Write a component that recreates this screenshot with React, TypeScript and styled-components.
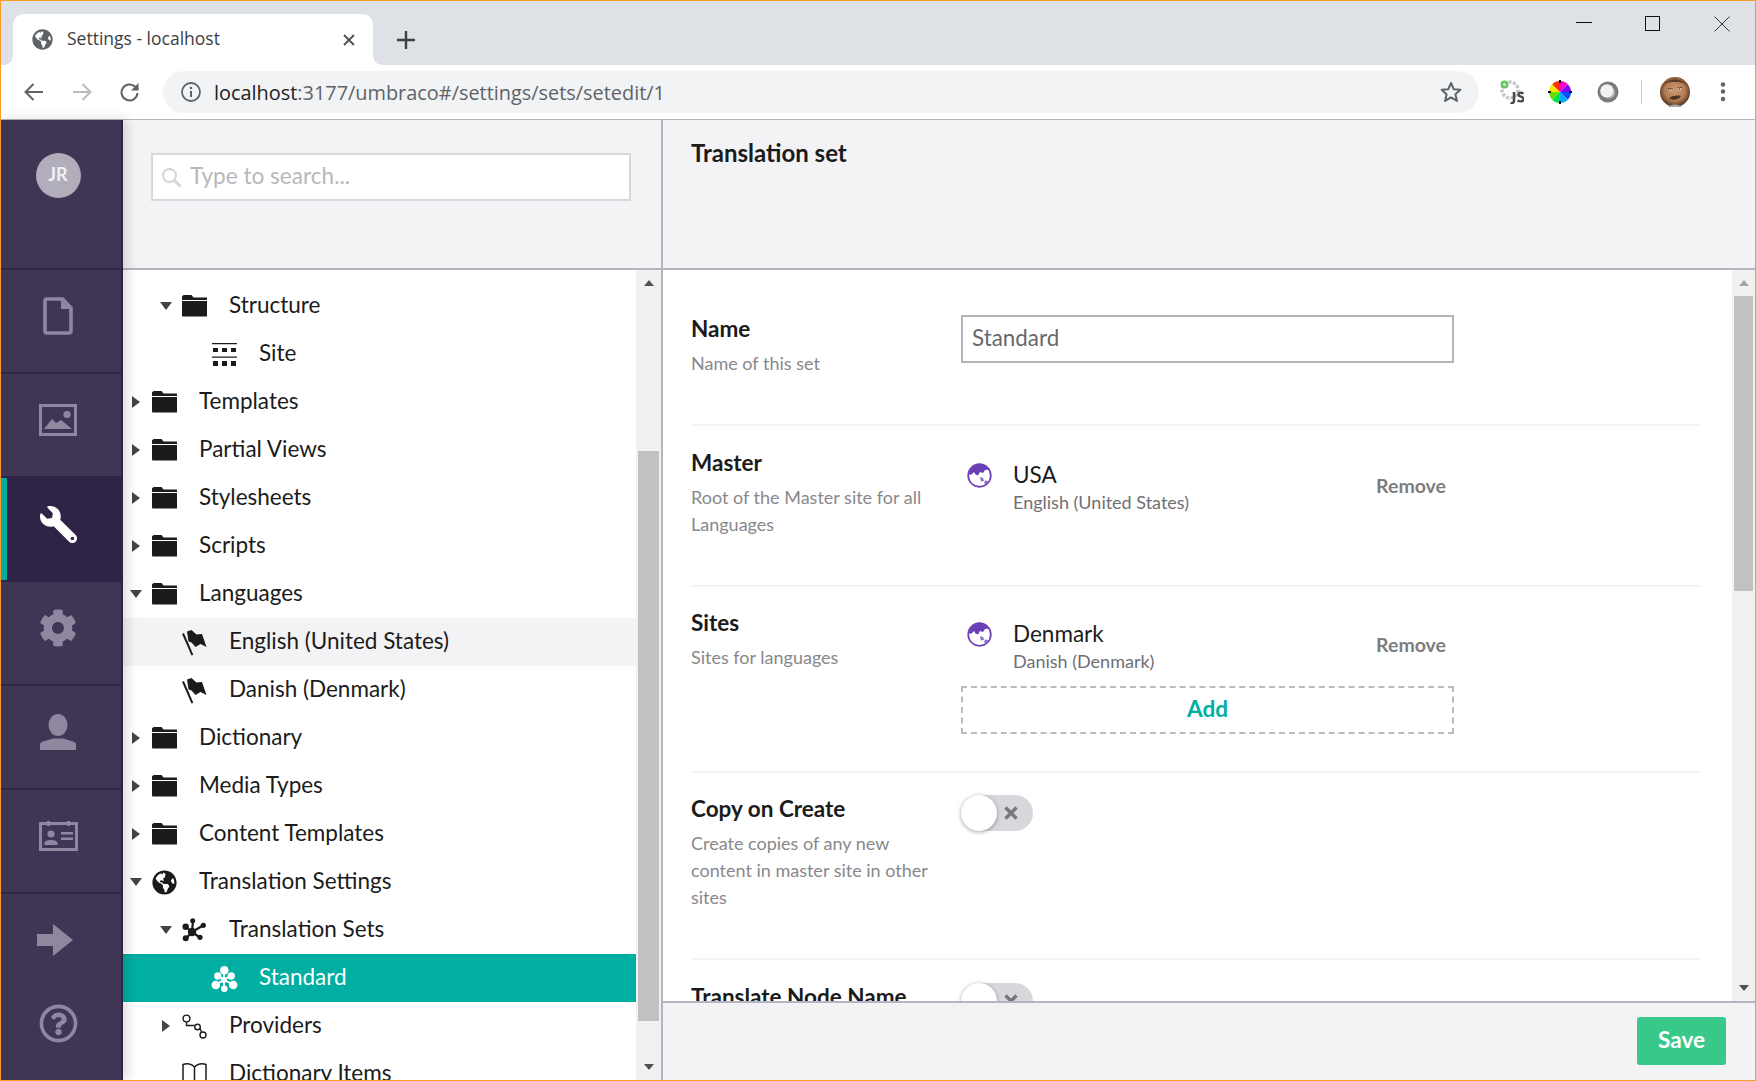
import React from 'react';
import styled, { createGlobalStyle, css } from 'styled-components';
import { FaCog, FaGlobeAmericas, FaRegQuestionCircle, FaWrench } from 'react-icons/fa';

const GlobalStyle = createGlobalStyle`
  html, body {
    margin: 0;
    padding: 0;
    overflow: hidden;
    background: #fff;
  }
  * {
    box-sizing: border-box;
  }
`;

const Page = styled.div`
  display: flex;
  flex-direction: column;
  width: 1756px;
  height: 1081px;
  border: 1px solid #fb9a26;
  overflow: hidden;
  font-family: Lato, 'Liberation Sans', sans-serif;
  color: #1b1b1b;
`;

/* browser chrome */

const TabStrip = styled.div`
  display: flex;
  flex: none;
  height: 64px;
  padding-left: 12px;
  background: #dee1e6;
`;

const Tab = styled.div`
  position: relative;
  display: flex;
  align-items: center;
  flex: none;
  width: 360px;
  height: 51px;
  margin-top: 13px;
  padding-left: 19px;
  background: #fff;
  border-radius: 11px 11px 0 0;
  color: #5f6368;
  &::before,
  &::after {
    content: '';
    position: absolute;
    bottom: 0;
    width: 9px;
    height: 9px;
  }
  &::before {
    left: -9px;
    background: radial-gradient(circle at 0 0, #dee1e6 8.5px, #fff 9px);
  }
  &::after {
    right: -9px;
    background: radial-gradient(circle at 100% 0, #dee1e6 8.5px, #fff 9px);
  }
`;

const TabTitle = styled.span`
  flex: 1;
  margin: 0 0 3px 14px;
  font-family: 'Open Sans', sans-serif;
  font-size: 17.5px;
  color: #3c4043;
`;

const TabClose = styled.svg`
  width: 12px;
  height: 12px;
  margin-right: 18px;
`;

const NewTab = styled.svg`
  flex: none;
  width: 18px;
  height: 18px;
  margin: 30px 0 0 24px;
`;

const WindowControls = styled.div`
  display: flex;
  gap: 53px;
  margin: 15px 25px 0 auto;
  height: 16px;
`;

const WindowIcon = styled.svg`
  width: 16px;
  height: 16px;
`;

const Toolbar = styled.div`
  display: flex;
  flex: none;
  align-items: center;
  height: 55px;
  padding: 0 0 1px 21px;
  background: #fff;
  border-bottom: 1px solid #b5b4be;
`;

const NavIcons = styled.div`
  display: flex;
  gap: 24px;
`;

const NavIcon = styled.svg`
  width: 24px;
  height: 24px;
`;

const Omnibox = styled.div`
  display: flex;
  align-items: center;
  flex: none;
  width: 1316px;
  height: 42px;
  margin: 1px 0 0 21px;
  padding: 0 16px 0 16px;
  background: #f1f3f4;
  border-radius: 21px;
`;

const Url = styled.span`
  flex: 1;
  margin-left: 11px;
  font-family: 'Open Sans', sans-serif;
  font-size: 19.9px;
  color: #5f6368;
  white-space: nowrap;
`;

const UrlHost = styled.span`
  color: #202124;
`;

const Extensions = styled.div`
  display: flex;
  align-items: center;
  gap: 24px;
  margin: 1px 0 0 21px;
`;

const ExtIcon = styled.svg`
  display: block;
  width: 24px;
  height: 24px;
`;

const ToolbarDivider = styled.div`
  width: 1px;
  height: 24px;
  margin: 1px 0 0 21px;
  background: #cdced1;
`;

const Profile = styled.svg`
  flex: none;
  width: 30px;
  height: 30px;
  margin: 1px 0 0 18px;
`;

const Kebab = styled.svg`
  flex: none;
  width: 12px;
  height: 22px;
  margin: 1px 0 0 27px;
`;

/* app */

const Body = styled.div`
  display: flex;
  flex: 1;
  min-height: 0;
`;

const Sidebar = styled.nav`
  position: relative;
  z-index: 1;
  display: flex;
  flex: none;
  flex-direction: column;
  width: 122px;
  background: #413556;
  border-right: 2px solid #2f2445;
  box-shadow: 3px 0 12px rgba(0, 0, 0, 0.16);
`;

const SidebarTop = styled.div`
  flex: none;
  height: 150px;
  padding: 33px 6px 0 0;
  border-bottom: 2px solid #2f2445;
`;

const Avatar = styled.div`
  display: flex;
  align-items: center;
  justify-content: center;
  width: 45px;
  height: 45px;
  margin: 0 auto;
  padding-bottom: 4px;
  border-radius: 50%;
  background: #b1adbb;
  color: #f1f0f3;
  font-size: 18px;
  font-weight: 700;
`;

const SideItem = styled.div<{ $active?: boolean; $plain?: boolean; $height?: number }>(
  ({ $active, $plain, $height = 104 }) => css`
    display: flex;
    flex: none;
    align-items: center;
    justify-content: center;
    height: ${$height}px;
    padding: ${$plain ? '0 6px 0 0' : '0 6px 10px 0'};
    color: #8f879f;
    border-bottom: ${$plain ? 'none' : '2px solid #2f2445'};
    ${$active &&
    css`
      color: #fff;
      background: #2f2445;
      box-shadow: inset 6px 0 0 #00aea2;
    `}
  `,
);

const Mirror = styled.span`
  display: flex;
  transform: scaleX(-1);
`;

const SideSvg = styled.svg<{ $shift?: number }>(
  ({ $shift = 0 }) => css`
    display: block;
    margin-right: ${$shift}px;
    fill: currentColor;
  `,
);

const TreePanel = styled.section`
  display: flex;
  flex: none;
  flex-direction: column;
  width: 540px;
  border-right: 2px solid #b5b4c2;
`;

const SearchHeader = styled.div`
  flex: none;
  height: 150px;
  padding: 33px 30px 0 28px;
  background: #f3f3f5;
  border-bottom: 2px solid #b5b4c2;
`;

const Search = styled.div`
  display: flex;
  align-items: center;
  height: 48px;
  padding: 0 0 3px 8px;
  background: #fff;
  border: 2px solid #d8d8dc;
  color: #b8b8b8;
  font-size: 22.6px;
`;

const SearchIcon = styled.svg`
  flex: none;
  width: 21px;
  height: 21px;
  margin: 4px 8px 0 0;
`;

const TreeArea = styled.div`
  display: flex;
  flex: 1;
  min-height: 0;
`;

const TreeList = styled.ul`
  flex: 1;
  margin: 0;
  padding: 12px 0 0;
  overflow: hidden;
  list-style: none;
`;

const TreeRow = styled.li<{ $level: number; $state?: 'hover' | 'active' }>(
  ({ $level, $state }) => css`
    display: flex;
    align-items: center;
    height: 48px;
    padding-left: ${7 + $level * 30}px;
    font-size: 22.5px;
    white-space: nowrap;
    background: ${$state === 'active' ? '#00aea2' : $state === 'hover' ? '#f3f3f5' : 'transparent'};
    color: ${$state === 'active' ? '#fff' : '#1b1b1b'};
  `,
);

const TreeLabel = styled.span`
  margin-bottom: 3px;
`;

const CaretSlot = styled.span`
  display: flex;
  flex: none;
  align-items: center;
  justify-content: center;
  width: 12px;
  height: 12px;
  margin-right: 10px;
`;

const Caret = styled.span<{ $open?: boolean }>(
  ({ $open }) => css`
    width: 0;
    height: 0;
    ${$open
      ? css`
          border-left: 6px solid transparent;
          border-right: 6px solid transparent;
          border-top: 8px solid #444;
        `
      : css`
          border-top: 6px solid transparent;
          border-bottom: 6px solid transparent;
          border-left: 8px solid #444;
        `}
  `,
);

const TreeIcon = styled.svg`
  flex: none;
  width: 25px;
  height: 25px;
  margin-right: 22px;
  fill: currentColor;
  overflow: visible;
`;

const TreeGlobe = styled.span`
  display: flex;
  flex: none;
  width: 25px;
  margin-right: 22px;
  color: #1b1b1b;
`;

const ScrollTrack = styled.div<{ $width: number }>(
  ({ $width }) => css`
    display: flex;
    flex: none;
    flex-direction: column;
    width: ${$width}px;
    background: #f1f1f1;
  `,
);

const ScrollArrow = styled.div<{ $down?: boolean; $pale?: boolean }>(
  ({ $down, $pale }) => css`
    display: flex;
    flex: none;
    align-items: center;
    justify-content: center;
    height: 26px;
    &::after {
      content: '';
      width: 0;
      height: 0;
      border-left: 5.5px solid transparent;
      border-right: 5.5px solid transparent;
      ${$down
        ? `border-top: 6px solid ${$pale ? '#a3a3a3' : '#505050'};`
        : `border-bottom: 6px solid ${$pale ? '#a3a3a3' : '#505050'};`}
    }
  `,
);

const ScrollSpace = styled.div`
  flex: 1;
  display: flex;
  flex-direction: column;
  padding: 0 2px;
`;

const ScrollThumb = styled.div<{ $top: number; $height: number }>(
  ({ $top, $height }) => css`
    flex: none;
    height: ${$height}px;
    margin-top: ${$top}px;
    background: #c1c1c1;
  `,
);

const EditorPanel = styled.section`
  display: flex;
  flex: 1;
  min-width: 0;
  flex-direction: column;
`;

const EditorHeader = styled.header`
  flex: none;
  height: 150px;
  padding: 19px 28px 0;
  background: #f3f3f5;
  border-bottom: 2px solid #b5b4c2;
  font-size: 24px;
  font-weight: 700;
  line-height: 27px;
`;

const EditorMain = styled.div`
  display: flex;
  flex: 1;
  min-height: 0;
`;

const Form = styled.div`
  flex: 1;
  min-width: 0;
  padding: 22px 31px 0 28px;
  overflow: hidden;
`;

const FormRow = styled.div<{ $top: number; $bottom: number; $last?: boolean }>(
  ({ $top, $bottom, $last }) => css`
    display: flex;
    padding: ${$top}px 0 ${$bottom}px;
    border-bottom: ${$last ? 'none' : '2px solid #f3f3f5'};
  `,
);

const LabelCol = styled.div`
  flex: none;
  width: 270px;
`;

const Label = styled.div`
  font-size: 22.5px;
  font-weight: 700;
  line-height: 27px;
`;

const Hint = styled.div`
  width: 250px;
  margin-top: 8px;
  color: #88888c;
  font-size: 18px;
  line-height: 27px;
`;

const ValueCol = styled.div<{ $top?: number }>(
  ({ $top = 0 }) => css`
    flex: none;
    width: 493px;
    padding-top: ${$top}px;
  `,
);

const TextInput = styled.div`
  display: flex;
  align-items: center;
  height: 48px;
  padding: 0 0 3px 9px;
  border: 2px solid #b5b4bc;
  color: #68676c;
  font-size: 22.4px;
`;

const Picked = styled.div`
  display: flex;
  align-items: center;
  height: 77px;
`;

const PickedIcon = styled.svg`
  flex: none;
  align-self: flex-start;
  width: 25px;
  height: 25px;
  margin: 13px 21px 0 6px;
`;

const PickedText = styled.div`
  flex: 1;
`;

const PickedName = styled.div`
  font-size: 22.5px;
  line-height: 27px;
`;

const PickedSub = styled.div`
  margin-top: 1px;
  color: #6f6f73;
  font-size: 18px;
  line-height: 27px;
`;

const RemoveLink = styled.span`
  margin: 0 8px 6px 0;
  color: #7d7d80;
  font-size: 19.5px;
  font-weight: 700;
`;

const AddBox = styled.div`
  display: flex;
  align-items: center;
  justify-content: center;
  height: 48px;
  padding-bottom: 3px;
  border: 2px dashed #bbbbbf;
  color: #00aea2;
  font-size: 22.6px;
  font-weight: 700;
`;

const Toggle = styled.div`
  position: relative;
  display: flex;
  align-items: center;
  justify-content: flex-end;
  width: 72px;
  height: 36px;
  padding-right: 14px;
  border-radius: 18px;
  background: #d8d8dc;
  &::before {
    content: '';
    position: absolute;
    top: 0;
    left: 0;
    width: 36px;
    height: 36px;
    border-radius: 50%;
    background: #fff;
    box-shadow: 0 1px 4px rgba(0, 0, 0, 0.35);
  }
`;

const ToggleX = styled.svg`
  width: 16px;
  height: 16px;
`;

const EditorFooter = styled.footer`
  display: flex;
  flex: none;
  justify-content: flex-end;
  height: 79px;
  padding: 14px 29px 0 0;
  background: #f3f3f5;
  border-top: 2px solid #b5b4c2;
`;

const SaveButton = styled.div`
  display: flex;
  align-items: center;
  justify-content: center;
  width: 89px;
  height: 48px;
  padding-bottom: 3px;
  border-radius: 3px;
  background: #38c98a;
  color: #fff;
  font-size: 22.6px;
  font-weight: 700;
`;

/* drawings */

const FolderIcon = () => (
  <TreeIcon viewBox="0 0 25 25">
    <path d="M0 5V2.500L1.500 1h8l2 2.500H25V6H0z" />
    <path d="M0 7h25v15.500H1a1 1 0 0 1-1-1z" />
  </TreeIcon>
);

const SiteIcon = () => (
  <TreeIcon viewBox="0 0 25 25">
    <path d="M0 1h25v1.200H0zM0 14.500h25v1.200H0z" />
    <path d="M1 6h5v4H1zM10 6h5v4h-5zM19 6h5v4h-5zM1 19h5v5H1zM10 19h5v5h-5zM19 19h5v5h-5z" />
  </TreeIcon>
);

const FlagIcon = () => (
  <TreeIcon viewBox="0 0 25 25">
    <path d="M1 3.500l9.400 21.600" stroke="currentColor" strokeWidth="2" fill="none" />
    <path d="M5 1.500L9.500 0l5 4.500 5.500-.5 4.500 13-6-3-5 3-4-4.500-3-1z" />
  </TreeIcon>
);

const SetsIcon = () => (
  <TreeIcon viewBox="0 0 25 25">
    <path d="M10 14L4 9M10 14L11 3M10 14L21 7.500M10 14l8 5.500M10 14L4 20.500" stroke="currentColor" strokeWidth="2.200" />
    <circle cx="10" cy="14" r="4.200" />
    <circle cx="3.700" cy="8.700" r="3.200" />
    <circle cx="10.700" cy="2.700" r="2.500" />
    <circle cx="21.300" cy="7.300" r="2.600" />
    <circle cx="18" cy="19.300" r="2.600" />
    <circle cx="3.700" cy="20.300" r="3" />
  </TreeIcon>
);

const StandardIcon = () => (
  <TreeIcon viewBox="1 0 25 25">
    <path d="M13 13.500V4M13 13.500L7 10M13 13.500L20 10M13 13.500L5 19M13 13.500L22 19M13 13.500V22" stroke="currentColor" strokeWidth="1.800" />
    <circle cx="13" cy="14" r="3" />
    <circle cx="13.300" cy="4.300" r="4.300" />
    <circle cx="6.800" cy="10" r="3.700" />
    <circle cx="20.200" cy="10" r="3.700" />
    <circle cx="4.800" cy="19" r="4.300" />
    <circle cx="22.200" cy="19" r="4.300" />
    <circle cx="13.300" cy="22.700" r="3.300" />
  </TreeIcon>
);

const ProvidersIcon = () => (
  <TreeIcon viewBox="0 0 25 25">
    <g fill="none" stroke="currentColor" strokeWidth="1.400">
      <circle cx="4.500" cy="4.500" r="3.400" />
      <circle cx="15.500" cy="13" r="2.800" />
      <circle cx="21" cy="21" r="3" />
      <path d="M4.500 8v3.500h8M18 14.500l1.500 3.500" />
    </g>
  </TreeIcon>
);

const BookIcon = () => (
  <TreeIcon viewBox="0 0 25 25">
    <path
      d="M12.500 5C10 2 5 1 1 2.500V24c4-1 9 0 11.500 2 2.500-2 7.500-3 11.500-2V2.500C20 1 15 2 12.500 5zv21"
      fill="none"
      stroke="currentColor"
      strokeWidth="1.500"
    />
  </TreeIcon>
);

const PurpleGlobe = () => (
  <PickedIcon viewBox="0 0 25 25">
    <circle cx="12.500" cy="12.500" r="11.300" fill="#fff" stroke="#6a3fb5" strokeWidth="1.700" />
    <path
      d="M2 11C3 5 8 1.500 12.500 1.500c4 0 8 2 9.500 5l-4 .5-2 3-3-1-2 3.500-2.500-1-1.500-2.500-2 2-1.500 1z"
      fill="#6a3fb5"
    />
    <path d="M13 14l3 1 1 3-3 .5zM18 17.500l3 .5-1 3-3-.5z" fill="#8a68c9" />
  </PickedIcon>
);

const treeRows: {
  label: string;
  level: number;
  icon: React.ReactNode;
  caret?: 'open' | 'closed';
  state?: 'hover' | 'active';
}[] = [
  { label: 'Structure', level: 1, icon: <FolderIcon />, caret: 'open' },
  { label: 'Site', level: 2, icon: <SiteIcon /> },
  { label: 'Templates', level: 0, icon: <FolderIcon />, caret: 'closed' },
  { label: 'Partial Views', level: 0, icon: <FolderIcon />, caret: 'closed' },
  { label: 'Stylesheets', level: 0, icon: <FolderIcon />, caret: 'closed' },
  { label: 'Scripts', level: 0, icon: <FolderIcon />, caret: 'closed' },
  { label: 'Languages', level: 0, icon: <FolderIcon />, caret: 'open' },
  { label: 'English (United States)', level: 1, icon: <FlagIcon />, state: 'hover' },
  { label: 'Danish (Denmark)', level: 1, icon: <FlagIcon /> },
  { label: 'Dictionary', level: 0, icon: <FolderIcon />, caret: 'closed' },
  { label: 'Media Types', level: 0, icon: <FolderIcon />, caret: 'closed' },
  { label: 'Content Templates', level: 0, icon: <FolderIcon />, caret: 'closed' },
  {
    label: 'Translation Settings',
    level: 0,
    icon: (
      <TreeGlobe>
        <FaGlobeAmericas size={25} />
      </TreeGlobe>
    ),
    caret: 'open',
  },
  { label: 'Translation Sets', level: 1, icon: <SetsIcon />, caret: 'open' },
  { label: 'Standard', level: 2, icon: <StandardIcon />, state: 'active' },
  { label: 'Providers', level: 1, icon: <ProvidersIcon />, caret: 'closed' },
  { label: 'Dictionary Items', level: 1, icon: <BookIcon /> },
];

const CloseX = () => (
  <ToggleX viewBox="0 0 16 16">
    <path d="M2.500 2.500l11 11M13.500 2.500l-11 11" stroke="#77767c" strokeWidth="3.400" />
  </ToggleX>
);

export default function App() {
  return (
    <Page>
      <GlobalStyle />
      <TabStrip>
        <Tab>
          <FaGlobeAmericas size={21} color="#5f6368" />
          <TabTitle>Settings - localhost</TabTitle>
          <TabClose viewBox="0 0 12 12">
            <path d="M1 1l10 10M11 1L1 11" stroke="#4a4d51" strokeWidth="1.800" />
          </TabClose>
        </Tab>
        <NewTab viewBox="0 0 18 18">
          <path d="M9 0v18M0 9h18" stroke="#3c4043" strokeWidth="2.400" />
        </NewTab>
        <WindowControls>
          <WindowIcon viewBox="0 0 16 16">
            <path d="M0 6.500h16" stroke="#111" strokeWidth="1" />
          </WindowIcon>
          <WindowIcon viewBox="0 0 16 16">
            <rect x="0.500" y="0.500" width="14" height="14" fill="none" stroke="#111" strokeWidth="1" />
          </WindowIcon>
          <WindowIcon viewBox="0 0 16 16">
            <path d="M0.500 0.500l15 15M15.500 0.500l-15 15" stroke="#333" strokeWidth="1" />
          </WindowIcon>
        </WindowControls>
      </TabStrip>

      <Toolbar>
        <NavIcons>
          <NavIcon viewBox="0 0 24 24">
            <path d="M21 12H4M11.500 4L3.500 12l8 8" fill="none" stroke="#5f6368" strokeWidth="2" />
          </NavIcon>
          <NavIcon viewBox="0 0 24 24">
            <path d="M3 12h17M12.500 4l8 8-8 8" fill="none" stroke="#b9bbbe" strokeWidth="2" />
          </NavIcon>
          <NavIcon viewBox="0 0 24 24">
            <path d="M19.500 13a8 8 0 1 1-2.300-6.200L20 9.500" fill="none" stroke="#5f6368" strokeWidth="2" />
            <path d="M20.500 3v7.500H13z" fill="#5f6368" />
          </NavIcon>
        </NavIcons>
        <Omnibox>
          <NavIcon viewBox="0 0 24 24">
            <circle cx="12" cy="12" r="9" fill="none" stroke="#5f6368" strokeWidth="1.800" />
            <path d="M12 11v6" stroke="#5f6368" strokeWidth="2" />
            <circle cx="12" cy="8" r="1.300" fill="#5f6368" />
          </NavIcon>
          <Url>
            <UrlHost>localhost</UrlHost>:3177/umbraco#/settings/sets/setedit/1
          </Url>
          <NavIcon viewBox="0 0 24 24">
            <path
              d="M12 3l2.700 6.200 6.700.6-5 4.500 1.500 6.600L12 17.400l-5.900 3.500 1.500-6.600-5-4.500 6.700-.6z"
              fill="none"
              stroke="#5f6368"
              strokeWidth="2"
              strokeLinejoin="round"
            />
          </NavIcon>
        </Omnibox>
        <Extensions>
          <ExtIcon viewBox="0 0 24 24">
            <circle cx="10" cy="10" r="8" fill="none" stroke="#c4c4c4" strokeWidth="3.400" strokeDasharray="3 1.500" />
            <circle cx="4.500" cy="4.500" r="4" fill="#6cc267" />
            <circle cx="4.500" cy="4.500" r="1.500" fill="#cfe9cd" />
            <path d="M14 12v9a2.500 2.500 0 0 1-3.500 2" fill="none" stroke="#4a4a4a" strokeWidth="2.500" />
            <path d="M23.500 13.500c-3-1.500-5.500-.5-5 1.500s5 1.500 5 4-3 3-6 1.500" fill="none" stroke="#4a4a4a" strokeWidth="2.400" />
          </ExtIcon>
          <ExtIcon viewBox="0 0 24 24">
            <path d="M12 12V1a11 11 0 0 1 7.800 3.200z" fill="#ff00c8" />
            <path d="M12 12l7.800-7.800A11 11 0 0 1 23 12z" fill="#7a00ff" />
            <path d="M12 12h11a11 11 0 0 1-3.200 7.800z" fill="#0050ff" />
            <path d="M12 12l7.800 7.800A11 11 0 0 1 12 23z" fill="#00a8ff" />
            <path d="M12 12v11a11 11 0 0 1-7.800-3.200z" fill="#00e050" />
            <path d="M12 12l-7.800 7.800A11 11 0 0 1 1 12z" fill="#66e000" />
            <path d="M12 12H1a11 11 0 0 1 3.200-7.800z" fill="#ffe600" />
            <path d="M12 12L4.200 4.200A11 11 0 0 1 12 1z" fill="#ff3000" />
            <path d="M12 0v3M12 21v3M0 12h3M21 12h3" stroke="#111" strokeWidth="2" />
          </ExtIcon>
          <ExtIcon viewBox="0 0 24 24">
            <circle cx="12" cy="12" r="10.500" fill="#7b7b7b" />
            <circle cx="11" cy="11" r="6.800" fill="#f1f1f1" />
            <path d="M18 7a8 8 0 0 1-9 10.500c5 2.500 13 0 9-10.500z" fill="#b4b4b4" />
          </ExtIcon>
        </Extensions>
        <ToolbarDivider />
        <Profile viewBox="0 0 30 30">
          <defs>
            <radialGradient id="face" cx="50%" cy="45%" r="55%">
              <stop offset="0%" stopColor="#cf9a72" />
              <stop offset="62%" stopColor="#b57c52" />
              <stop offset="100%" stopColor="#4a2f1d" />
            </radialGradient>
          </defs>
          <circle cx="15" cy="15" r="15" fill="url(#face)" />
          <path d="M3 9A14 14 0 0 1 27 9c-4-4-7-4-12-4S7 5 3 9z" fill="#5a3a24" />
          <path d="M8 11.500h4.500M17.500 10.500H22" stroke="#5b4030" strokeWidth="1.200" />
          <circle cx="10.500" cy="13" r="1.500" fill="#e8ddd0" />
          <circle cx="19.500" cy="12" r="1.500" fill="#e8ddd0" />
          <circle cx="10.500" cy="13" r="0.700" fill="#2a1c14" />
          <circle cx="19.500" cy="12" r="0.700" fill="#2a1c14" />
          <path d="M9 21c3-2.200 8-3 12-2-2 4-9 5-12 2z" fill="#4a3527" />
          <path d="M8 30c2-3.500 12-3.500 14 0z" fill="#a9a5a0" />
        </Profile>
        <Kebab viewBox="0 0 12 22">
          <circle cx="6" cy="3.500" r="2.200" fill="#5f6368" />
          <circle cx="6" cy="10.500" r="2.200" fill="#5f6368" />
          <circle cx="6" cy="18" r="2.200" fill="#5f6368" />
        </Kebab>
      </Toolbar>

      <Body>
        <Sidebar>
          <SidebarTop>
            <Avatar>JR</Avatar>
          </SidebarTop>
          <SideItem>
            <SideSvg width="30" height="38" viewBox="0 0 30 38">
              <path d="M4 2h15.500L28 11v23a2 2 0 0 1-2 2H4a2 2 0 0 1-2-2V4a2 2 0 0 1 2-2z" fill="none" stroke="currentColor" strokeWidth="3.600" strokeLinejoin="round" />
              <path d="M18 3l9 9h-9z" />
            </SideSvg>
          </SideItem>
          <SideItem>
            <SideSvg width="38" height="32" viewBox="0 0 38 32">
              <rect x="1.500" y="1.500" width="35" height="29" fill="none" stroke="currentColor" strokeWidth="3" />
              <path d="M5 25l8-10 4 4 5-3 11 9z" />
              <circle cx="28" cy="10.500" r="3.600" />
            </SideSvg>
          </SideItem>
          <SideItem $active>
            <Mirror>
              <FaWrench size={37} />
            </Mirror>
          </SideItem>
          <SideItem>
            <FaCog size={38} />
          </SideItem>
          <SideItem>
            <SideSvg width="36" height="36" viewBox="0 0 36 36">
              <ellipse cx="18" cy="11" rx="9.500" ry="11" />
              <path d="M0 36v-5c0-2 1-3 3-3.500l10-3h10l10 3c2 .5 3 1.500 3 3.500v5z" />
            </SideSvg>
          </SideItem>
          <SideItem>
            <SideSvg width="39" height="30" viewBox="0 0 39 30">
              <rect x="1.500" y="2.500" width="36" height="26" fill="none" stroke="currentColor" strokeWidth="3" />
              <path d="M8 0h3v5H8zM28 0h3v5h-3z" />
              <circle cx="12" cy="13" r="3.600" />
              <path d="M5.500 24v-2c0-2 3-3 6.500-3s6.500 1 6.500 3v2zM22 11h12v2.500H22zM22 16.500h12V19H22z" />
            </SideSvg>
          </SideItem>
          <SideItem $plain $height={92}>
            <SideSvg $shift={6} width="36" height="32" viewBox="0 0 36 32">
              <path d="M0 10h16V0l20 16-20 16V22H0z" />
            </SideSvg>
          </SideItem>
          <SideItem $plain $height={74}>
            <FaRegQuestionCircle size={39} />
          </SideItem>
        </Sidebar>

        <TreePanel>
          <SearchHeader>
            <Search>
              <SearchIcon viewBox="0 0 21 21">
                <circle cx="8.500" cy="8.500" r="6.500" fill="none" stroke="#d5d5d5" strokeWidth="2" />
                <path d="M13 13l6.500 6.500" stroke="#d5d5d5" strokeWidth="3" />
              </SearchIcon>
              Type to search...
            </Search>
          </SearchHeader>
          <TreeArea>
            <TreeList>
              {treeRows.map((row) => (
                <TreeRow key={row.label} $level={row.level} $state={row.state}>
                  <CaretSlot>{row.caret && <Caret $open={row.caret === 'open'} />}</CaretSlot>
                  {row.icon}
                  <TreeLabel>{row.label}</TreeLabel>
                </TreeRow>
              ))}
            </TreeList>
            <ScrollTrack $width={25}>
              <ScrollArrow />
              <ScrollSpace>
                <ScrollThumb $top={155} $height={570} />
              </ScrollSpace>
              <ScrollArrow $down />
            </ScrollTrack>
          </TreeArea>
        </TreePanel>

        <EditorPanel>
          <EditorHeader>Translation set</EditorHeader>
          <EditorMain>
            <Form>
              <FormRow $top={23} $bottom={47}>
                <LabelCol>
                  <Label>Name</Label>
                  <Hint>Name of this set</Hint>
                </LabelCol>
                <ValueCol>
                  <TextInput>Standard</TextInput>
                </ValueCol>
              </FormRow>
              <FormRow $top={23} $bottom={47}>
                <LabelCol>
                  <Label>Master</Label>
                  <Hint>Root of the Master site for all Languages</Hint>
                </LabelCol>
                <ValueCol $top={1}>
                  <Picked>
                    <PurpleGlobe />
                    <PickedText>
                      <PickedName>USA</PickedName>
                      <PickedSub>English (United States)</PickedSub>
                    </PickedText>
                    <RemoveLink>Remove</RemoveLink>
                  </Picked>
                </ValueCol>
              </FormRow>
              <FormRow $top={22} $bottom={37}>
                <LabelCol>
                  <Label>Sites</Label>
                  <Hint>Sites for languages</Hint>
                </LabelCol>
                <ValueCol>
                  <Picked>
                    <PurpleGlobe />
                    <PickedText>
                      <PickedName>Denmark</PickedName>
                      <PickedSub>Danish (Denmark)</PickedSub>
                    </PickedText>
                    <RemoveLink>Remove</RemoveLink>
                  </Picked>
                  <AddBox>Add</AddBox>
                </ValueCol>
              </FormRow>
              <FormRow $top={22} $bottom={47}>
                <LabelCol>
                  <Label>Copy on Create</Label>
                  <Hint>Create copies of any new content in master site in other sites</Hint>
                </LabelCol>
                <ValueCol>
                  <Toggle>
                    <CloseX />
                  </Toggle>
                </ValueCol>
              </FormRow>
              <FormRow $top={23} $bottom={0} $last>
                <LabelCol>
                  <Label>Translate Node Name</Label>
                </LabelCol>
                <ValueCol>
                  <Toggle>
                    <CloseX />
                  </Toggle>
                </ValueCol>
              </FormRow>
            </Form>
            <ScrollTrack $width={23}>
              <ScrollArrow $pale />
              <ScrollSpace>
                <ScrollThumb $top={0} $height={295} />
              </ScrollSpace>
              <ScrollArrow $down />
            </ScrollTrack>
          </EditorMain>
          <EditorFooter>
            <SaveButton>Save</SaveButton>
          </EditorFooter>
        </EditorPanel>
      </Body>
    </Page>
  );
}
